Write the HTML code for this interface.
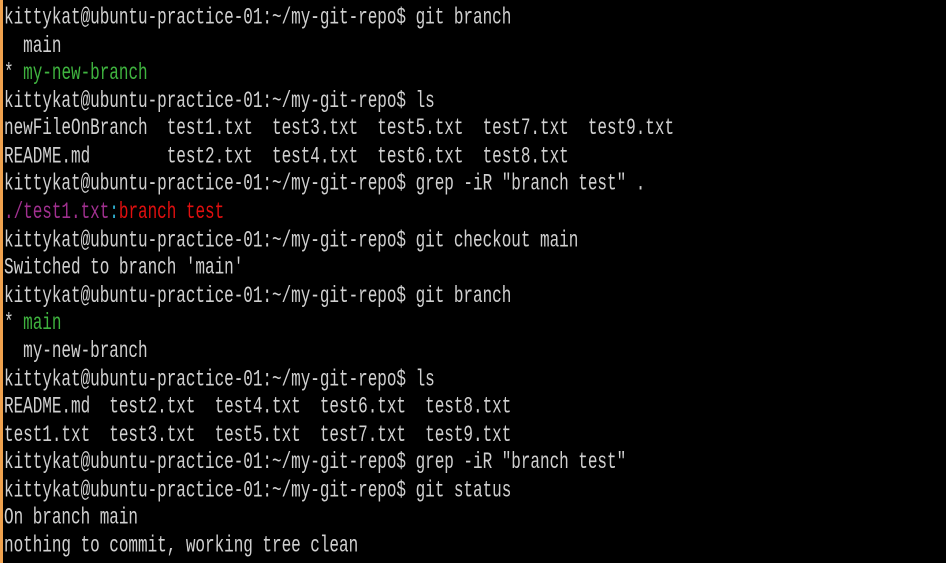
<!DOCTYPE html>
<html><head><meta charset="utf-8"><style>
html,body{margin:0;padding:0;background:#000;width:946px;height:563px;overflow:hidden;position:relative}
.bar{position:absolute;left:0;top:0;width:3px;height:563px;background:#f0a24e}
.t{position:absolute;left:4px;top:5px;transform:scale(1,1.42);transform-origin:0 0;font-family:"Liberation Mono",monospace;font-size:16px;line-height:19.58px;color:#d0d0d0;white-space:pre;letter-spacing:-0.03px}
.g{color:#3fb33f}.p{color:#a0308f}.c{color:#2fb0d0}.r{color:#e00f0f}
</style></head><body><div class="bar"></div><div class="t">kittykat@ubuntu-practice-01:~/my-git-repo$ git branch
  main
* <span class="g">my-new-branch</span>
kittykat@ubuntu-practice-01:~/my-git-repo$ ls
newFileOnBranch  test1.txt  test3.txt  test5.txt  test7.txt  test9.txt
README.md        test2.txt  test4.txt  test6.txt  test8.txt
kittykat@ubuntu-practice-01:~/my-git-repo$ grep -iR "branch test" .
<span class="p">./test1.txt</span><span class="c">:</span><span class="r">branch test</span>
kittykat@ubuntu-practice-01:~/my-git-repo$ git checkout main
Switched to branch 'main'
kittykat@ubuntu-practice-01:~/my-git-repo$ git branch
* <span class="g">main</span>
  my-new-branch
kittykat@ubuntu-practice-01:~/my-git-repo$ ls
README.md  test2.txt  test4.txt  test6.txt  test8.txt
test1.txt  test3.txt  test5.txt  test7.txt  test9.txt
kittykat@ubuntu-practice-01:~/my-git-repo$ grep -iR "branch test"
kittykat@ubuntu-practice-01:~/my-git-repo$ git status
On branch main
nothing to commit, working tree clean
kittykat@ubuntu-practice-01:~/my-git-repo$ </div></body></html>
